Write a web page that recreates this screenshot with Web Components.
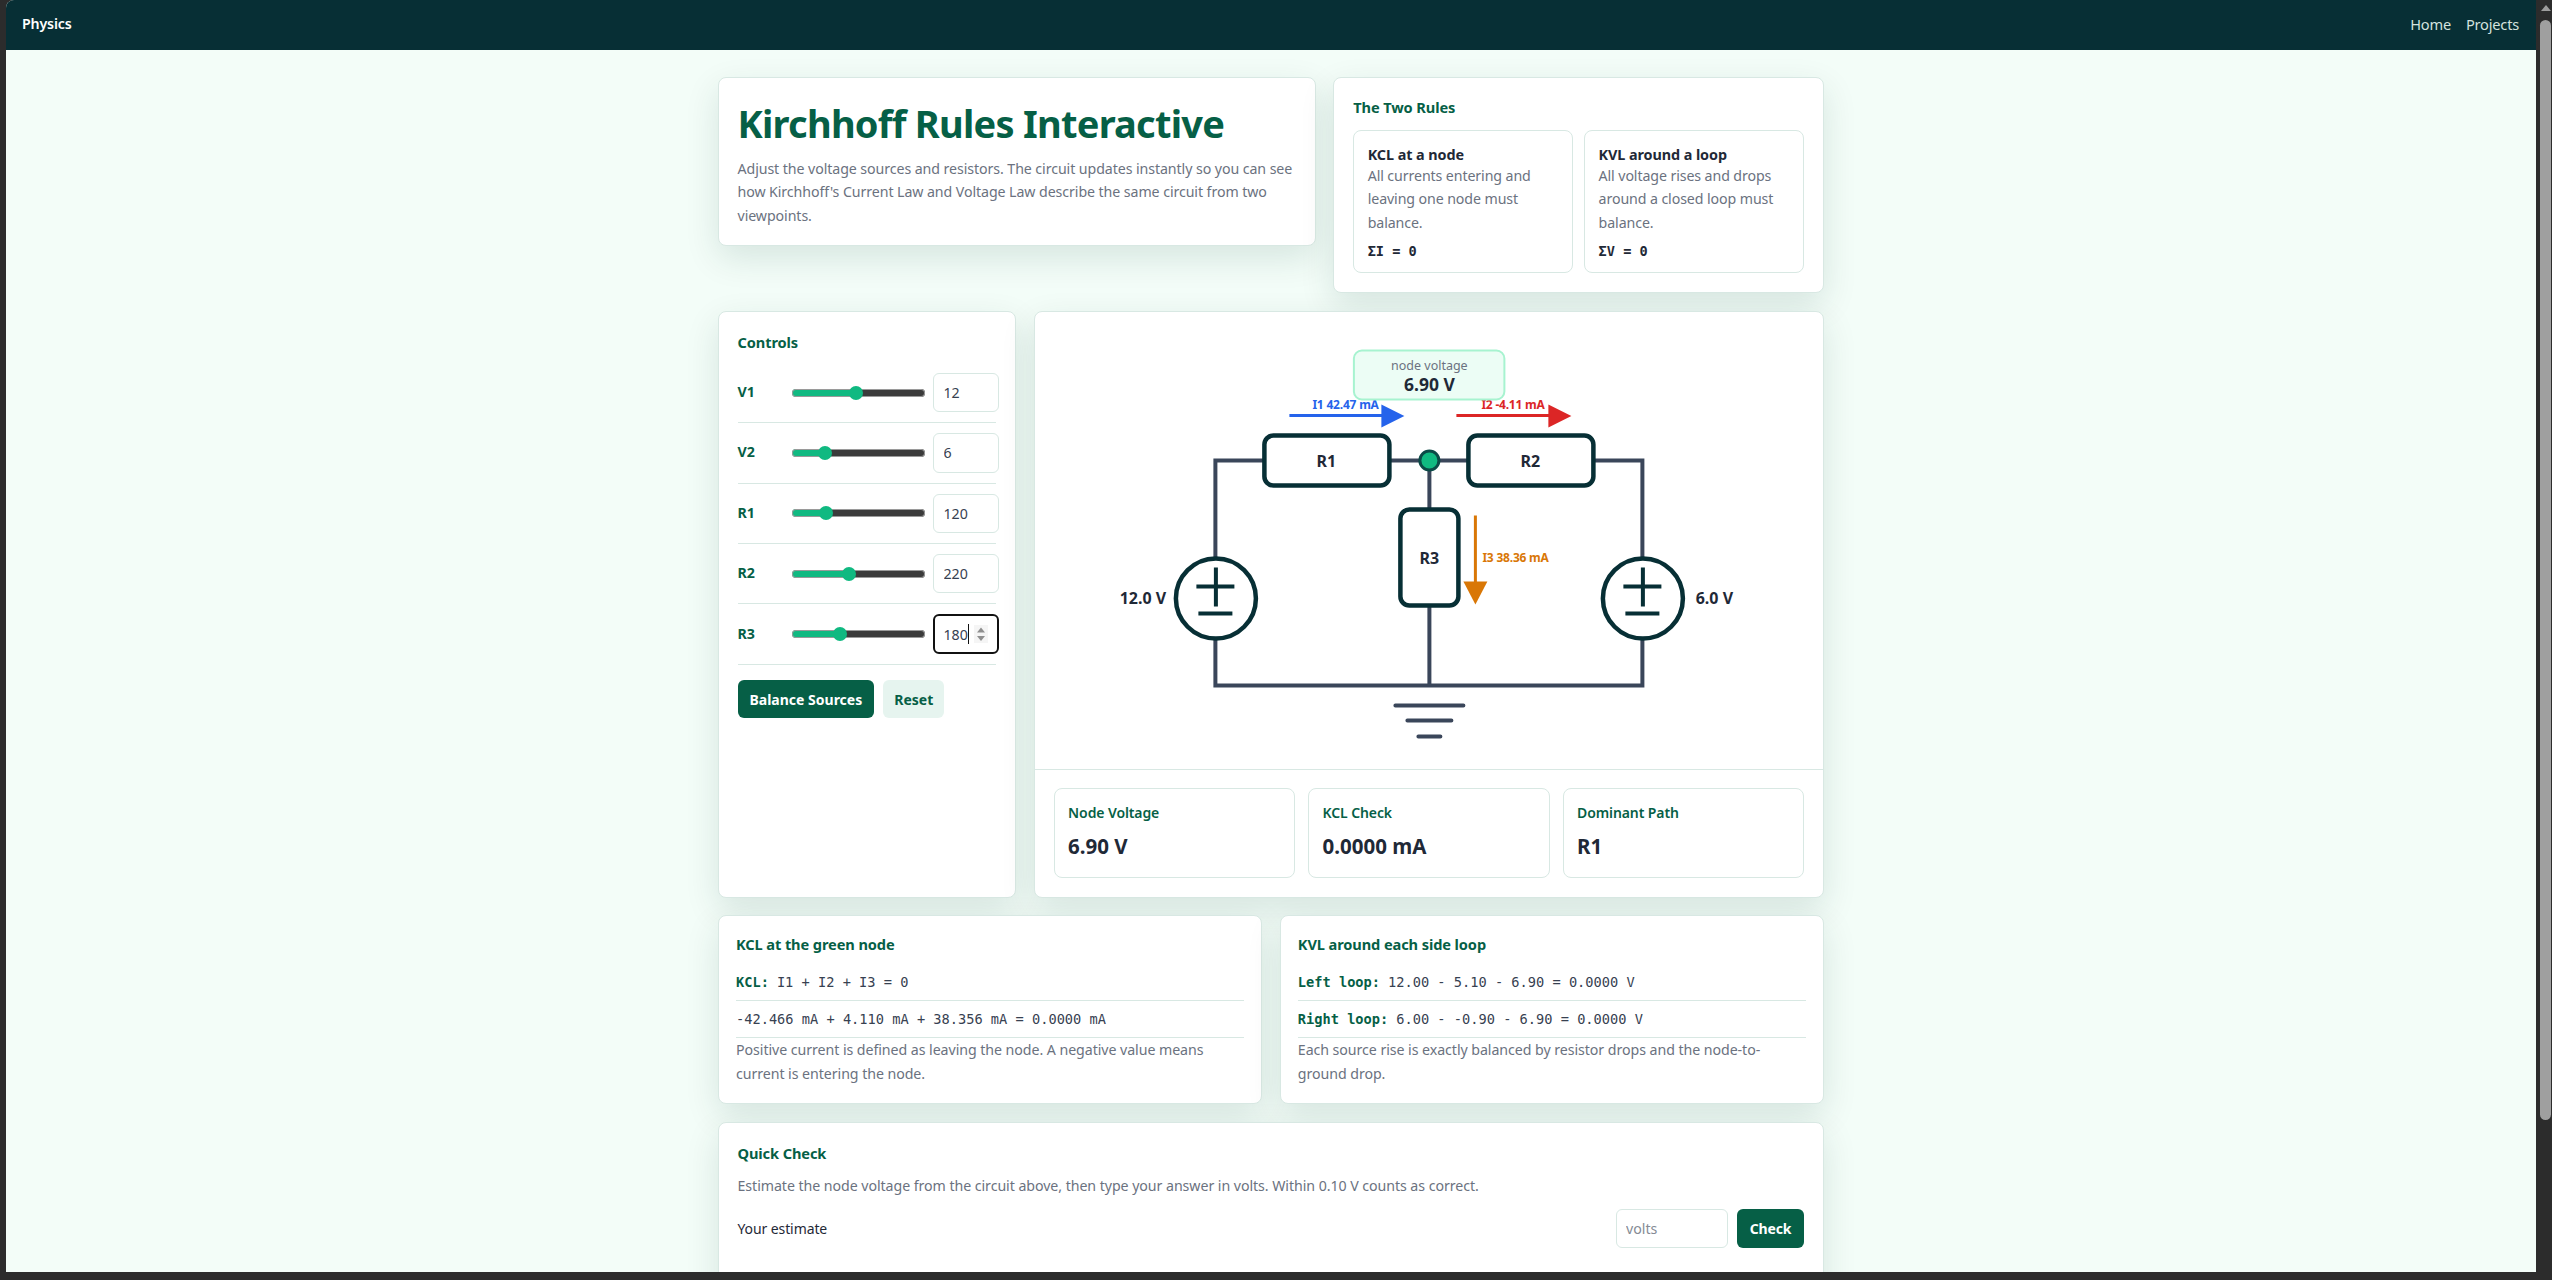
<!DOCTYPE html>
<html lang="en">
<head>
<meta charset="utf-8">
<title>Kirchhoff Rules Interactive</title>
<style>
    html, body { margin: 0; height: 100%; overflow: hidden; background: #2c2c2c; }
    body { font-family: "Noto Sans", "Open Sans", sans-serif; color: #1f2937; }
</style>
</head>
<body>

<window-frame>
    <site-nav></site-nav>
    <page-main>
        <two-col cols="597.6px 1fr">
            <kc-card pad="21px 19px 18px 18.5px">
                <hero-head title="Kirchhoff Rules Interactive">Adjust the voltage sources and resistors. The circuit updates instantly so you can see how Kirchhoff's Current Law and Voltage Law describe the same circuit from two viewpoints.</hero-head>
            </kc-card>
            <kc-card heading="The Two Rules" pad="19px">
                <two-col cols="1fr 1fr" gap="11px">
                    <rule-box title="KCL at a node" formula="ΣI = 0">All currents entering and leaving one node must balance.</rule-box>
                    <rule-box title="KVL around a loop" formula="ΣV = 0">All voltage rises and drops around a closed loop must balance.</rule-box>
                </two-col>
            </kc-card>
        </two-col>

        <two-col cols="298px 1fr" stretch>
            <kc-card heading="Controls" pad="20px 19px 20px 18.5px" head-gap="11px">
                <control-row label="V1" value="12" min="1" max="24"></control-row>
                <control-row label="V2" value="6" min="1" max="24"></control-row>
                <control-row label="R1" value="120" min="10" max="500"></control-row>
                <control-row label="R2" value="220" min="20" max="500"></control-row>
                <control-row label="R3" value="180" min="10" max="500" focused></control-row>
                <button-row>
                    <kc-button kind="primary">Balance Sources</kc-button>
                    <kc-button kind="soft">Reset</kc-button>
                </button-row>
            </kc-card>
            <kc-card pad="0">
                <circuit-view></circuit-view>
                <metric-strip>
                    <metric-tile label="Node Voltage" value="6.90 V"></metric-tile>
                    <metric-tile label="KCL Check" value="0.0000 mA"></metric-tile>
                    <metric-tile label="Dominant Path" value="R1"></metric-tile>
                </metric-strip>
            </kc-card>
        </two-col>

        <two-col cols="1fr 1fr">
            <kc-card heading="KCL at the green node" pad="17.5px 17px 18px" head-gap="10.5px">
                <eq-line><b slot="tag">KCL:</b>I1 + I2 + I3 = 0</eq-line>
                <eq-line>-42.466 mA + 4.110 mA + 38.356 mA = 0.0000 mA</eq-line>
                <note-text>Positive current is defined as leaving the node. A negative value means current is entering the node.</note-text>
            </kc-card>
            <kc-card heading="KVL around each side loop" pad="17.5px 17px 18px" head-gap="10.5px">
                <eq-line><b slot="tag">Left loop:</b>12.00 - 5.10 - 6.90 = 0.0000 V</eq-line>
                <eq-line><b slot="tag">Right loop:</b>6.00 - -0.90 - 6.90 = 0.0000 V</eq-line>
                <note-text>Each source rise is exactly balanced by resistor drops and the node-to-ground drop.</note-text>
            </kc-card>
        </two-col>

        <kc-card heading="Quick Check" pad="20px 19px 60px 18.5px" head-gap="11px">
            <note-text>Estimate the node voltage from the circuit above, then type your answer in volts. Within 0.10 V counts as correct.</note-text>
            <quick-row></quick-row>
        </kc-card>
    </page-main>
</window-frame>

<script>
    // helper so every component stays short
    function makeShadow(el, html) {
        el.attachShadow({ mode: 'open' });
        const template = document.createElement('template');
        template.innerHTML = html;
        el.shadowRoot.appendChild(template.content.cloneNode(true));
    }

    class WindowFrame extends HTMLElement {
        constructor() {
            super();
            makeShadow(this, `
                <style>
                    :host { display: flex; height: 1280px; background: #2c2c2c; }
                    .left { width: 6px; flex: none; }
                    .view {
                        flex: 1;
                        min-width: 0;
                        height: 1272px;
                        overflow: hidden;
                        background: #f3fdf8;
                        border-top-left-radius: 8px;
                    }
                    .bar { width: 16px; flex: none; }
                    .up {
                        width: 0; height: 0; margin: 5px 0 0 5px;
                        border-left: 5px solid transparent;
                        border-right: 5px solid transparent;
                        border-bottom: 6px solid #9d9d9d;
                    }
                    .thumb {
                        width: 11px; height: 1100px; margin: 9px 0 0 4px;
                        background: #9f9f9f;
                        border-radius: 6px;
                    }
                </style>
                <div class="left"></div>
                <div class="view"><slot></slot></div>
                <div class="bar"><div class="up"></div><div class="thumb"></div></div>
            `);
        }
    }

    class SiteNav extends HTMLElement {
        constructor() {
            super();
            makeShadow(this, `
                <style>
                    :host {
                        box-sizing: border-box;
                        display: flex;
                        align-items: center;
                        justify-content: space-between;
                        height: 50px;
                        padding: 0 17px 3px 16px;
                        background: #072f35;
                    }
                    .brand { color: #fff; font-weight: 600; font-size: 14.2px; letter-spacing: -0.15px; }
                    nav { display: flex; gap: 15px; font-size: 14.6px; letter-spacing: -0.2px; }
                    a { color: #d4e2df; text-decoration: none; }
                </style>
                <div class="brand">Physics</div>
                <nav><a href="#">Home</a><a href="#">Projects</a></nav>
            `);
        }
    }

    class PageMain extends HTMLElement {
        constructor() {
            super();
            makeShadow(this, `
                <style>
                    :host {
                        display: flex;
                        flex-direction: column;
                        gap: 17.6px;
                        width: 1106px;
                        margin: 0 auto;
                        padding-top: 26.5px;
                    }
                </style>
                <slot></slot>
            `);
        }
    }

    class TwoCol extends HTMLElement {
        constructor() {
            super();
            makeShadow(this, `
                <style>
                    :host { display: grid; column-gap: 17.6px; align-items: start; }
                    :host([stretch]) { align-items: stretch; }
                </style>
                <slot></slot>
            `);
        }
        connectedCallback() {
            this.style.gridTemplateColumns = this.getAttribute('cols');
            if (this.hasAttribute('gap')) this.style.columnGap = this.getAttribute('gap');
        }
    }

    class KcCard extends HTMLElement {
        constructor() {
            super();
            makeShadow(this, `
                <style>
                    :host {
                        display: block;
                        min-width: 0;
                        background: #fff;
                        border: 1px solid #d8e8e3;
                        border-radius: 8px;
                        box-shadow: 0 12px 34px rgba(6, 60, 50, 0.12);
                    }
                    h2 {
                        margin: 0 0 13px;
                        color: #065f46;
                        font-size: 14.6px;
                        line-height: 20px;
                        font-weight: 700;
                        letter-spacing: -0.1px;
                    }
                </style>
                <h2></h2>
                <slot></slot>
            `);
        }
        connectedCallback() {
            const h2 = this.shadowRoot.querySelector('h2');
            const heading = this.getAttribute('heading');
            if (heading) {
                h2.textContent = heading;
                if (this.hasAttribute('head-gap')) h2.style.marginBottom = this.getAttribute('head-gap');
            } else {
                h2.remove();
            }
            this.style.padding = this.getAttribute('pad') || '19px';
        }
    }

    class HeroHead extends HTMLElement {
        constructor() {
            super();
            makeShadow(this, `
                <style>
                    :host { display: block; }
                    h1 {
                        margin: 0 0 10px;
                        color: #065f46;
                        font-size: 38px;
                        line-height: 48px;
                        font-weight: 700;
                        letter-spacing: -0.75px;
                    }
                    p {
                        margin: 0;
                        color: #6b7280;
                        font-size: 14.2px;
                        line-height: 23.5px;
                        letter-spacing: -0.08px;
                    }
                </style>
                <h1></h1>
                <p><slot></slot></p>
            `);
        }
        connectedCallback() {
            this.shadowRoot.querySelector('h1').textContent = this.getAttribute('title');
            this.removeAttribute('title');
        }
    }

    class RuleBox extends HTMLElement {
        constructor() {
            super();
            makeShadow(this, `
                <style>
                    :host {
                        display: block;
                        border: 1px solid #d8e8e3;
                        border-radius: 8px;
                        padding: 13px 14px 12px 13.5px;
                    }
                    .t { color: #1f2937; font-weight: 700; font-size: 14.4px; line-height: 21px; letter-spacing: -0.08px; }
                    .d { margin-top: -0.5px; color: #6b7280; font-size: 14.2px; line-height: 23.4px; letter-spacing: -0.1px; }
                    .f {
                        margin-top: 8px;
                        color: #1f2937;
                        font: 700 13.6px/18px "DejaVu Sans Mono", monospace;
                    }
                </style>
                <div class="t"></div>
                <div class="d"><slot></slot></div>
                <div class="f"></div>
            `);
        }
        connectedCallback() {
            this.shadowRoot.querySelector('.t').textContent = this.getAttribute('title');
            this.shadowRoot.querySelector('.f').textContent = this.getAttribute('formula');
            this.removeAttribute('title');
        }
    }

    class ControlRow extends HTMLElement {
        constructor() {
            super();
            makeShadow(this, `
                <style>
                    :host {
                        display: grid;
                        grid-template-columns: 46.5px 133px 66px;
                        column-gap: 8px;
                        align-items: center;
                        padding: 10px 0;
                        border-bottom: 1px solid #d8e8e3;
                    }
                    label { padding-bottom: 2px; color: #065f46; font-weight: 700; font-size: 14.2px; }
                    input[type=range] {
                        -webkit-appearance: none;
                        appearance: none;
                        width: 133px;
                        height: 14px;
                        margin: 0;
                        background: transparent;
                    }
                    input[type=range]::-webkit-slider-runnable-track {
                        height: 8px;
                        border-radius: 4px;
                        box-shadow: inset 0 0 0 1px #9a9a9a;
                        background: linear-gradient(to right, #10b981 var(--pct), #3b3b3b var(--pct));
                    }
                    input[type=range]::-webkit-slider-thumb {
                        -webkit-appearance: none;
                        width: 14px;
                        height: 14px;
                        margin-top: -3px;
                        border-radius: 50%;
                        background: #10b981;
                    }
                    .field { position: relative; }
                    input[type=number] {
                        box-sizing: border-box;
                        display: block;
                        width: 66px;
                        height: 39.4px;
                        padding: 0 9.5px;
                        border: 1px solid #d8e8e3;
                        border-radius: 6px;
                        outline: none;
                        background: #fff;
                        color: #374151;
                        font: 14.2px "Noto Sans", sans-serif;
                        -moz-appearance: textfield;
                    }
                    input[type=number]::-webkit-inner-spin-button { -webkit-appearance: none; margin: 0; }
                    :host([focused]) input[type=number] { border: 2px solid #111; padding: 0 8.5px; }
                    .caret, .spin { display: none; }
                    :host([focused]) .caret {
                        display: block;
                        position: absolute;
                        left: 34.5px;
                        top: 10px;
                        width: 1px;
                        height: 20px;
                        background: #111;
                    }
                    :host([focused]) .spin {
                        display: block;
                        position: absolute;
                        right: 11px;
                        top: 11px;
                    }
                </style>
                <label></label>
                <input type="range">
                <div class="field">
                    <input type="number">
                    <span class="caret"></span>
                    <svg class="spin" width="14" height="18" viewBox="0 0 14 18">
                        <rect width="14" height="18" fill="#f5f5f5"/>
                        <path d="M3 7.5 7 2.5 11 7.5Z M3 11 7 16 11 11Z" fill="#8f8f8f"/>
                    </svg>
                </div>
            `);
        }
        connectedCallback() {
            const value = Number(this.getAttribute('value'));
            const min = Number(this.getAttribute('min'));
            const max = Number(this.getAttribute('max'));
            const range = this.shadowRoot.querySelector('input[type=range]');
            const number = this.shadowRoot.querySelector('input[type=number]');
            this.shadowRoot.querySelector('label').textContent = this.getAttribute('label');
            range.min = min;
            range.max = max;
            range.value = value;
            number.setAttribute('value', value);
            // thumb centre, in px, so the green part ends under the thumb
            const pct = 7 + 119 * (value - min) / (max - min);
            range.style.setProperty('--pct', pct + 'px');
        }
    }

    class ButtonRow extends HTMLElement {
        constructor() {
            super();
            makeShadow(this, `
                <style>
                    :host { display: flex; gap: 9px; margin-top: 15.5px; }
                </style>
                <slot></slot>
            `);
        }
    }

    class KcButton extends HTMLElement {
        constructor() {
            super();
            makeShadow(this, `
                <style>
                    :host { display: block; }
                    button {
                        height: 38px;
                        padding: 0 12px;
                        border: none;
                        border-radius: 6px;
                        font: 700 14px "Noto Sans", sans-serif;
                        cursor: pointer;
                    }
                    .primary { background: #065f46; color: #fff; }
                    .soft { padding: 0 11px; background: #e6f4ef; color: #065f46; }
                </style>
                <button><slot></slot></button>
            `);
        }
        connectedCallback() {
            this.shadowRoot.querySelector('button').classList.add(this.getAttribute('kind'));
        }
    }

    class CircuitView extends HTMLElement {
        constructor() {
            super();
            makeShadow(this, `
                <style>
                    :host { display: block; height: 457px; }
                    svg { display: block; font-family: "Noto Sans", sans-serif; }
                    .wire { fill: none; stroke: #3a465a; stroke-width: 4; }
                    .gnd { stroke: #3a465a; stroke-width: 4; stroke-linecap: round; }
                    .part { fill: #fff; stroke: #072f35; stroke-width: 4.5; }
                    .sign { stroke: #072f35; stroke-width: 4; fill: none; }
                    .name { fill: #1f2937; font-size: 16px; font-weight: 700; text-anchor: middle; dominant-baseline: central; }
                    .amp {
                        font-size: 12px; font-weight: 700; letter-spacing: -0.2px;
                        paint-order: stroke; stroke: #fff; stroke-width: 2px;
                        dominant-baseline: central;
                    }
                </style>
                <svg width="788.4" height="457" viewBox="1034.6 312.5 788.4 457">
                    <path class="wire" d="M1215 559V461H1264M1389 461H1468M1593 461H1642V559M1215 640V686H1642V640M1429 461V510M1429 606V686"/>

                    <rect class="part" x="1264" y="436" width="125" height="50" rx="9"/>
                    <text class="name" x="1326" y="462">R1</text>
                    <rect class="part" x="1468" y="436" width="125" height="50" rx="9"/>
                    <text class="name" x="1530" y="462">R2</text>
                    <rect class="part" x="1400" y="510" width="58" height="96" rx="9"/>
                    <text class="name" x="1429" y="559">R3</text>

                    <circle cx="1429" cy="461" r="9.5" fill="#10b981" stroke="#0b4a47" stroke-width="3"/>

                    <circle class="part" cx="1215.5" cy="599" r="40"/>
                    <path class="sign" d="M1196 587H1234M1215.5 568V607M1198 614H1232"/>
                    <circle class="part" cx="1642.5" cy="599" r="40"/>
                    <path class="sign" d="M1623 587H1661M1642.5 568V607M1625 614H1659"/>
                    <text class="name" x="1142.5" y="599">12.0 V</text>
                    <text class="name" x="1714" y="599">6.0 V</text>

                    <path class="gnd" d="M1395 706H1463M1407 721H1451M1418 737H1440"/>

                    <path d="M1289 416H1384" stroke="#2563eb" stroke-width="3"/>
                    <path d="M1381 405L1404 416.5L1381 428Z" fill="#2563eb"/>
                    <text class="amp" x="1312" y="405" fill="#2563eb">I1 42.47 mA</text>

                    <path d="M1456 416H1551" stroke="#dc2626" stroke-width="3"/>
                    <path d="M1548 405L1571 416.5L1548 428Z" fill="#dc2626"/>
                    <text class="amp" x="1481" y="405" fill="#dc2626">I2 -4.11 mA</text>

                    <path d="M1475 516V585" stroke="#d97706" stroke-width="3"/>
                    <path d="M1463 582L1475 605L1487 582Z" fill="#d97706"/>
                    <text class="amp" x="1482" y="558" fill="#d97706">I3 38.36 mA</text>

                    <rect x="1353.5" y="351" width="150.5" height="49" rx="8" fill="#ecfdf5" stroke="#a7f3d0" stroke-width="2"/>
                    <text x="1429" y="366" fill="#6b7280" font-size="12.5" text-anchor="middle" dominant-baseline="central">node voltage</text>
                    <text x="1429" y="385" fill="#1f2937" font-size="17.5" font-weight="700" text-anchor="middle" dominant-baseline="central">6.90 V</text>
                </svg>
            `);
        }
    }

    class MetricStrip extends HTMLElement {
        constructor() {
            super();
            makeShadow(this, `
                <style>
                    :host {
                        display: grid;
                        grid-template-columns: repeat(3, 1fr);
                        gap: 13px;
                        padding: 18.5px 19px 18.5px;
                        border-top: 1px solid #d8e8e3;
                    }
                </style>
                <slot></slot>
            `);
        }
    }

    class MetricTile extends HTMLElement {
        constructor() {
            super();
            makeShadow(this, `
                <style>
                    :host {
                        display: block;
                        border: 1px solid #d8e8e3;
                        border-radius: 8px;
                        padding: 13.5px 13.5px 17.5px;
                    }
                    .l { color: #065f46; font-weight: 600; font-size: 14px; line-height: 20px; letter-spacing: -0.1px; }
                    .v { margin-top: 9px; color: #1f2937; font-weight: 700; font-size: 20.5px; line-height: 28px; }
                </style>
                <div class="l"></div>
                <div class="v"></div>
            `);
        }
        connectedCallback() {
            this.shadowRoot.querySelector('.l').textContent = this.getAttribute('label');
            this.shadowRoot.querySelector('.v').textContent = this.getAttribute('value');
        }
    }

    class EqLine extends HTMLElement {
        constructor() {
            super();
            makeShadow(this, `
                <style>
                    :host {
                        display: block;
                        padding: 8px 0;
                        border-bottom: 1px solid #d8e8e3;
                        color: #374151;
                        font: 13.67px/20px "DejaVu Sans Mono", monospace;
                        white-space: nowrap;
                    }
                    ::slotted(b) { color: #065f46; font-weight: 700; margin-right: 8px; }
                </style>
                <slot name="tag"></slot><slot></slot>
            `);
        }
    }

    class NoteText extends HTMLElement {
        constructor() {
            super();
            makeShadow(this, `
                <style>
                    :host {
                        display: block;
                        color: #6b7280;
                        font-size: 14.2px;
                        line-height: 23.5px;
                        letter-spacing: -0.06px;
                    }
                </style>
                <slot></slot>
            `);
        }
    }

    class QuickRow extends HTMLElement {
        constructor() {
            super();
            makeShadow(this, `
                <style>
                    :host {
                        display: flex;
                        align-items: center;
                        margin-top: 11px;
                        font-size: 14px;
                        letter-spacing: -0.1px;
                        color: #1f2937;
                    }
                    .label { flex: 1; }
                    input {
                        box-sizing: border-box;
                        width: 112px;
                        height: 39px;
                        margin-right: 9px;
                        padding: 0 9px;
                        border: 1px solid #d8e8e3;
                        border-radius: 6px;
                        outline: none;
                        font: 14.2px "Noto Sans", sans-serif;
                    }
                    input::placeholder { color: #858b95; }
                    button {
                        width: 67px;
                        height: 39px;
                        border: none;
                        border-radius: 6px;
                        background: #065f46;
                        color: #fff;
                        font: 700 14px "Noto Sans", sans-serif;
                        letter-spacing: -0.2px;
                    }
                </style>
                <div class="label">Your estimate</div>
                <input type="text" placeholder="volts">
                <button>Check</button>
            `);
        }
    }

    customElements.define('window-frame', WindowFrame);
    customElements.define('site-nav', SiteNav);
    customElements.define('page-main', PageMain);
    customElements.define('two-col', TwoCol);
    customElements.define('kc-card', KcCard);
    customElements.define('hero-head', HeroHead);
    customElements.define('rule-box', RuleBox);
    customElements.define('control-row', ControlRow);
    customElements.define('button-row', ButtonRow);
    customElements.define('kc-button', KcButton);
    customElements.define('circuit-view', CircuitView);
    customElements.define('metric-strip', MetricStrip);
    customElements.define('metric-tile', MetricTile);
    customElements.define('eq-line', EqLine);
    customElements.define('note-text', NoteText);
    customElements.define('quick-row', QuickRow);
</script>
</body>
</html>
